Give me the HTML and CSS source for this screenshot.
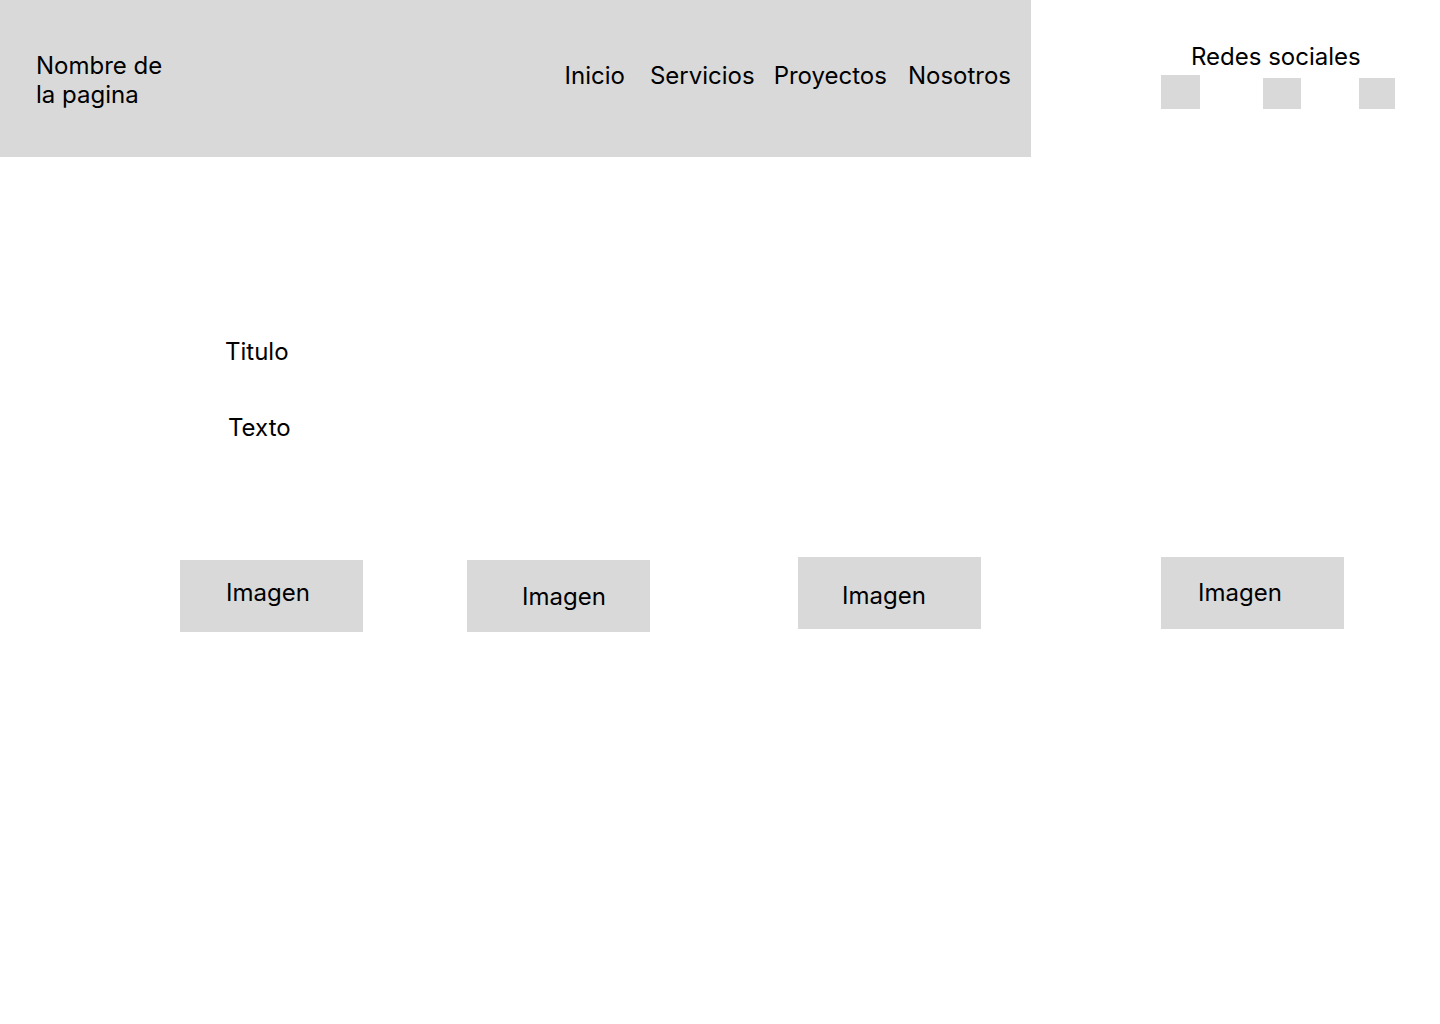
FILE: index.html
```html
<!DOCTYPE html>
<html lang="es">
<head>
<meta charset="utf-8">
<title>Nombre de la pagina</title>
<link rel="stylesheet" href="styles.css">
</head>
<body>
<div class="top">
  <header class="header">
    <div class="brand">Nombre de la pagina</div>
    <nav class="nav">
      <a class="nav-link nav-first">Inicio</a>
      <a class="nav-link nav-second">Servicios</a>
      <a class="nav-link">Proyectos</a>
      <a class="nav-link">Nosotros</a>
    </nav>
  </header>
  <aside class="social">
    <div class="social-title">Redes sociales</div>
    <div class="social-icons">
      <span class="sq sq-1"></span>
      <span class="sq sq-2"></span>
      <span class="sq sq-3"></span>
    </div>
  </aside>
</div>
<main class="main">
  <h1 class="title">Titulo</h1>
  <p class="text">Texto</p>
  <div class="gallery">
    <div class="img img-1"><span>Imagen</span></div>
    <div class="img img-2"><span>Imagen</span></div>
    <div class="img img-3"><span>Imagen</span></div>
    <div class="img img-4"><span>Imagen</span></div>
  </div>
</main>
</body>
</html>
```

FILE: styles.css
```css
* { box-sizing: border-box; }
html, body {
  margin: 0;
  padding: 0;
  background: #ffffff;
}
body {
  width: 1440px;
  height: 1024px;
  font-family: Inter, "Noto Sans", sans-serif;
  font-size: 24px;
  line-height: 29px;
  color: #000000;
  overflow: hidden;
}

.top {
  display: flex;
  align-items: flex-start;
}

.header {
  width: 1031px;
  height: 157px;
  background: #d9d9d9;
  display: flex;
  align-items: flex-start;
  justify-content: space-between;
  padding: 0 20px 0 36px;
}
.brand {
  width: 135px;
  margin-top: 51px;
}
.nav {
  display: flex;
  gap: 21px;
  margin-top: 61px;
}
.nav-link {
  color: #000;
  text-decoration: none;
}
.nav-first { margin-right: 4px; }
.nav-second { margin-right: -2px; }

.social {
  flex: 1;
  padding-top: 42px;
}
.social-title {
  padding-left: 160px;
}
.social-icons {
  display: flex;
  align-items: flex-end;
  margin-top: 4px;
  padding-left: 130px;
}
.sq {
  display: block;
  background: #d9d9d9;
}
.sq-1 { width: 39px; height: 34px; }
.sq-2 { width: 38px; height: 31px; margin-left: 63px; }
.sq-3 { width: 36px; height: 31px; margin-left: 58px; }

.main {
  padding-top: 180px;
}
.title {
  margin: 0 0 0 225px;
  font-size: 24px;
  font-weight: 400;
  line-height: 29px;
}
.text {
  margin: 47px 0 0 228px;
}
.gallery {
  display: flex;
  align-items: flex-start;
  margin-top: 115px;
  padding-left: 180px;
}
.img {
  width: 183px;
  height: 72px;
  background: #d9d9d9;
}
.img span { display: block; }
.img-1 { margin-top: 3px; padding: 18px 0 0 46px; }
.img-2 { margin-top: 3px; margin-left: 104px; padding: 22px 0 0 55px; }
.img-3 { margin-left: 148px; padding: 24px 0 0 44px; }
.img-4 { margin-left: 180px; padding: 21px 0 0 37px; }
```
